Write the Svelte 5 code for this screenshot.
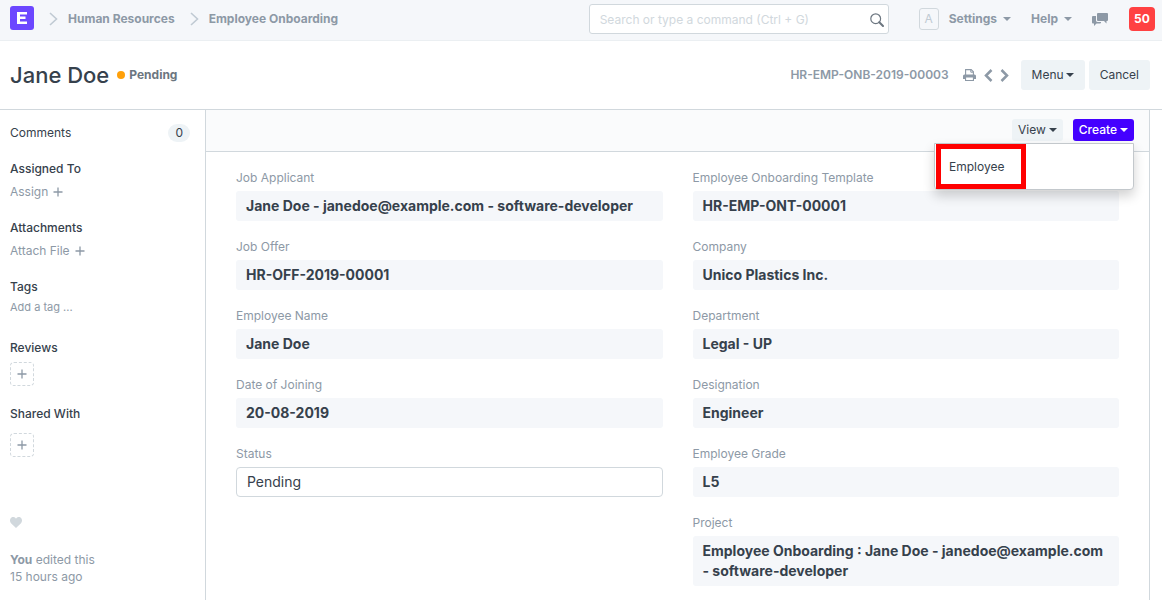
<script>
  const left = [
    { id: 'job-applicant', label: 'Job Applicant', value: 'Jane Doe - janedoe@example.com - software-developer' },
    { id: 'job-offer', label: 'Job Offer', value: 'HR-OFF-2019-00001' },
    { id: 'employee-name', label: 'Employee Name', value: 'Jane Doe' },
    { id: 'joining', label: 'Date of Joining', value: '20-08-2019' },
  ];
  const right = [
    { id: 'template', label: 'Employee Onboarding Template', value: 'HR-EMP-ONT-00001' },
    { id: 'company', label: 'Company', value: 'Unico Plastics Inc.' },
    { id: 'department', label: 'Department', value: 'Legal - UP' },
    { id: 'designation', label: 'Designation', value: 'Engineer' },
    { id: 'grade', label: 'Employee Grade', value: 'L5' },
    { id: 'project', label: 'Project', value: 'Employee Onboarding : Jane Doe - janedoe@example.com - software-developer' },
  ];
  let status = $state('Pending');
</script>

{#snippet caret()}
  <svg class="caret" width="8" height="4" viewBox="0 0 8 4" aria-hidden="true"><path d="M0 0h8L4 4z" fill="currentColor" /></svg>
{/snippet}

{#snippet plus()}
  <svg width="10" height="10" viewBox="0 0 10 10" aria-hidden="true"><path d="M5 .5v9M.5 5h9" fill="none" stroke="currentColor" stroke-width="1.3" /></svg>
{/snippet}

{#snippet crumb()}
  <svg class="crumb" width="9" height="14" viewBox="0 0 9 14" aria-hidden="true"><path d="M1 1l6.500 6L1 13" fill="none" stroke="#c0cad3" stroke-width="1.600" /></svg>
{/snippet}

{#snippet field(f)}
  <div class="field">
    <span class="label" id={f.id}>{f.label}</span>
    <div class="value" role="group" aria-labelledby={f.id}>{f.value}</div>
  </div>
{/snippet}

<header class="navbar">
  <nav class="crumbs" aria-label="Breadcrumb">
    <a class="logo" href="#home" aria-label="Home">
      <svg width="24" height="24" viewBox="0 0 24 24" aria-hidden="true">
        <rect width="24" height="24" rx="3" fill="#6c47ff" />
        <path d="M7 6h10v2.500H10v2h5.500v2.500H10v2.500h7V18H7z" fill="#fff" />
      </svg>
    </a>
    {@render crumb()}
    <a href="#hr">Human Resources</a>
    {@render crumb()}
    <a href="#onboarding">Employee Onboarding</a>
  </nav>
  <div class="search">
    <input type="text" aria-label="Search" placeholder="Search or type a command (Ctrl + G)" />
    <svg width="14" height="14" viewBox="0 0 14 14" aria-hidden="true">
      <circle cx="5.700" cy="5.700" r="4.900" fill="none" stroke="#6c7680" stroke-width="1.200" />
      <path d="M9.300 9.300l3.700 3.700" stroke="#6c7680" stroke-width="2" stroke-linecap="round" />
    </svg>
  </div>
  <button class="plain account"><span class="avatar">A</span>Settings {@render caret()}</button>
  <button class="plain help">Help {@render caret()}</button>
  <button class="plain chat" aria-label="Chat">
    <svg width="16" height="13" viewBox="0 0 16 13" aria-hidden="true">
      <path d="M6 0h9q1 0 1 1v6q0 1-1 1h-.500v2.500L12 8H6q-1 0-1-1V1q0-1 1-1z" fill="currentColor" />
      <path d="M1 3h3v4.500Q4.200 9 5.800 9H9v.500q0 1-1 1H4.500L2 13v-2.500H1q-1 0-1-1V4q0-1 1-1z" fill="currentColor" />
    </svg>
  </button>
  <button class="badge" aria-label="50 notifications">50</button>
</header>

<section class="head">
  <h1>Jane Doe</h1>
  <span class="dot"></span>
  <span class="state">Pending</span>
  <span class="docname">HR-EMP-ONB-2019-00003</span>
  <button class="plain print" aria-label="Print">
    <svg width="13" height="12" viewBox="0 0 13 12" aria-hidden="true">
      <path d="M2.600 6V.600h5.600L10.400 2.800V6" fill="none" stroke="currentColor" stroke-width="1.100" />
      <path d="M7.800.600v2.600h2.600" fill="none" stroke="currentColor" stroke-width="1" />
      <path fill-rule="evenodd" d="M1.500 5.500h10Q13 5.500 13 7v3h-2v2H2v-2H0V7Q0 5.500 1.500 5.500zM3.100 8.600v2.300h6.800V8.600z" fill="currentColor" />
    </svg>
  </button>
  <button class="plain prev" aria-label="Previous">
    <svg width="9" height="13" viewBox="0 0 9 13" aria-hidden="true"><path d="M7.500 1L2 6.500 7.500 12" fill="none" stroke="currentColor" stroke-width="2.500" /></svg>
  </button>
  <button class="plain next" aria-label="Next">
    <svg width="9" height="13" viewBox="0 0 9 13" aria-hidden="true"><path d="M1.500 1L7 6.500 1.500 12" fill="none" stroke="currentColor" stroke-width="2.500" /></svg>
  </button>
  <button class="btn">Menu {@render caret()}</button>
  <button class="btn">Cancel</button>
</section>

<div class="body">
  <aside>
    <div class="comments"><a href="#comments">Comments</a><span class="count">0</span></div>
    <h2>Assigned To</h2>
    <button class="plain add">Assign {@render plus()}</button>
    <h2>Attachments</h2>
    <button class="plain add">Attach File {@render plus()}</button>
    <h2>Tags</h2>
    <input class="tag" type="text" aria-label="Add a tag" placeholder="Add a tag ..." />
    <h2>Reviews</h2>
    <button class="plain box" aria-label="Add review">{@render plus()}</button>
    <h2 class="shared">Shared With</h2>
    <button class="plain box" aria-label="Share">{@render plus()}</button>
    <button class="plain like" aria-label="Like">
      <svg width="12" height="11" viewBox="0 0 12 11" aria-hidden="true"><path d="M6 11L1 6.200C-.600 4.500-.200 1.500 1.500.500 3.200-.500 5.200.200 6 1.800 6.800.200 8.800-.500 10.500.500c1.700 1 2.100 4 .500 5.700z" fill="#d1d8dd" /></svg>
    </button>
    <p><b>You</b> edited this<br />15 hours ago</p>
  </aside>

  <main>
    <div class="toolbar">
      <button class="btn small">View {@render caret()}</button>
      <div class="dropdown">
        <button class="btn small primary" aria-expanded="true">Create {@render caret()}</button>
        <div class="menu"><a href="#employee">Employee</a></div>
      </div>
    </div>
    <div class="form">
      <div class="column">
        {#each left as f (f.id)}{@render field(f)}{/each}
        <div class="field">
          <label class="label" for="status">Status</label>
          <select id="status" bind:value={status}><option>Pending</option></select>
        </div>
      </div>
      <div class="column">
        {#each right as f (f.id)}{@render field(f)}{/each}
      </div>
    </div>
  </main>
</div>

<style>
  :global(body) {
    margin: 0;
    font: 12px/18px Inter, "Liberation Sans", sans-serif;
    color: #36414c;
    background: #fff;
  }
  :global(#app) {
    display: flex;
    flex-direction: column;
    min-height: 100vh;
  }
  * { box-sizing: border-box; }
  a { color: inherit; text-decoration: none; }
  svg { display: block; flex: none; }
  button, input, select { font: inherit; color: inherit; margin: 0; }
  button { cursor: pointer; display: flex; align-items: center; white-space: nowrap; }
  .plain { background: none; border: 0; padding: 0; color: #8d99a6; }

  .navbar {
    display: flex;
    align-items: center;
    height: 41px;
    padding: 0 7px 2px 10px;
    background: #f5f7fa;
    border-bottom: 1px solid #ebeff2;
    color: #8d99a6;
    font-weight: 700;
  }
  .crumbs { display: flex; align-items: center; margin-right: auto; }
  .logo { margin-bottom: 2px; }
  .crumb { margin: 0 10px 0 15px; }
  .search { position: relative; width: 300px; margin-right: 30px; }
  .search input {
    display: block;
    width: 100%;
    height: 30px;
    padding: 0 30px 0 10px;
    border: 1px solid #d1d8dd;
    border-radius: 3px;
    background: #fff;
    font-weight: 400;
  }
  .search input::placeholder { color: #d1d8dd; opacity: 1; }
  .search svg { position: absolute; right: 5px; top: 9px; }
  .navbar .plain { font-weight: 700; }
  .caret { margin-left: 6px; }
  .avatar {
    width: 20px;
    height: 22px;
    margin-right: 10px;
    border: 1px solid #d1d8dd;
    border-radius: 3px;
    line-height: 20px;
    text-align: center;
    font-weight: 400;
    color: #c0cad3;
  }
  .help { margin-left: 20px; }
  .chat { margin: 0 21px 0 20px; }
  .badge {
    justify-content: center;
    width: 26px;
    height: 24px;
    padding: 0;
    border: 0;
    border-radius: 4px;
    background: #ff4142;
    color: #fff;
    font-weight: 700;
  }

  .head {
    display: flex;
    align-items: center;
    height: 69px;
    padding: 0 12px 0 10px;
    border-bottom: 1px solid #d1d8dd;
  }
  h1 { margin: 0; font-size: 22px; line-height: 30px; font-weight: 500; }
  .dot { width: 8px; height: 8px; margin: 0 4px 0 8px; border-radius: 50%; background: #ffa00a; }
  .state { font-weight: 700; color: #6c7680; }
  .docname { margin-left: auto; font-weight: 600; color: #8d99a6; }
  .print { margin-left: 14px; }
  .prev { margin-left: 8px; }
  .next { margin: 0 12px 0 7px; }
  .btn {
    height: 30px;
    padding: 0 11px;
    border: 0;
    border-radius: 3px;
    background: #eef3f6;
  }
  .btn .caret { margin-left: 2px; }
  .small .caret { margin-left: 3px; }
  .btn + .btn { margin-left: 4px; }

  .body { display: grid; grid-template-columns: 206px 1fr; flex: 1; padding-right: 12px; }
  aside { padding: 12px 15px 12px 10px; border-right: 1px solid #d1d8dd; }
  .comments { display: flex; justify-content: space-between; align-items: center; height: 22px; margin-bottom: 16px; }
  .count { padding: 0 7px; border-radius: 10px; background: #eef3f6; }
  h2 { margin: 0; font-size: 12px; line-height: 18px; font-weight: 500; }
  .add { gap: 5px; height: 18px; margin: 5px 0 18px; }
  .tag {
    display: block;
    width: 100%;
    height: 18px;
    margin: 2px 0 23px;
    padding: 0;
    border: 0;
    background: none;
    font-size: 11px;
  }
  .tag::placeholder { color: #8d99a6; opacity: 1; }
  .box {
    justify-content: center;
    width: 24px;
    height: 24px;
    margin-top: 5px;
    border: 1px dashed #d1d8dd;
    border-radius: 4px;
  }
  .shared { margin: 19px 0 10px; }
  .like { margin: 60px 0 23px; }
  p { margin: 0; line-height: 17px; color: #8d99a6; }

  main { border-right: 1px solid #d1d8dd; min-width: 0; }
  .toolbar {
    display: flex;
    justify-content: flex-end;
    align-items: center;
    gap: 10px;
    height: 42px;
    padding: 0 15px 2px;
    background: #fafbfc;
    border-bottom: 1px solid #d1d8dd;
  }
  .small { height: 22px; padding: 0 6px; }
  .primary { background: #4400ff; color: #fff; font-weight: 500; }
  .dropdown { position: relative; }
  .menu {
    position: absolute;
    top: 24px;
    right: 0;
    width: 200px;
    padding: 0 1px;
    background: #fff;
    border: 1px solid #c3c8cc;
    border-radius: 0 0 4px 4px;
    box-shadow: 0 6px 12px rgba(0, 0, 0, 0.18);
  }
  .menu a {
    display: block;
    width: 90px;
    padding: 9px 8px 8px;
    border: 5px solid #f00;
  }
  .form {
    display: grid;
    grid-template-columns: 1fr 1fr;
    gap: 30px;
    padding: 17px 30px 0;
  }
  .column { display: flex; flex-direction: column; gap: 17px; min-width: 0; }
  .label { display: block; margin-bottom: 4px; color: #8d99a6; }
  .value {
    padding: 5px 10px;
    border-radius: 3px;
    background: #f5f7fa;
    font-size: 14px;
    line-height: 20px;
    font-weight: 700;
  }
  select {
    display: block;
    width: 100%;
    height: 30px;
    padding: 0 10px;
    border: 1px solid #d1d8dd;
    border-radius: 4px;
    background: #fff;
    appearance: none;
    font-size: 14px;
  }
</style>
